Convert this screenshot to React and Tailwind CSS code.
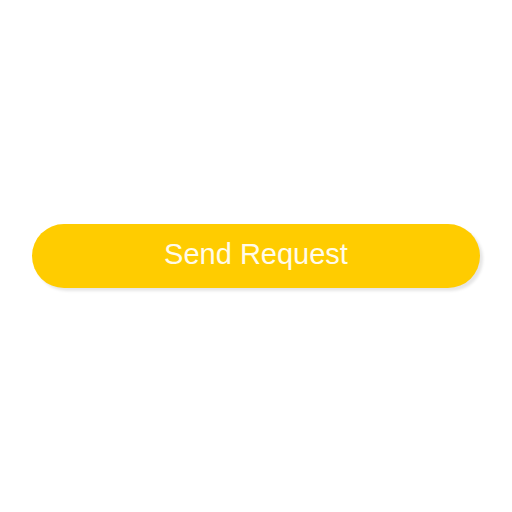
import React from 'react';

export default function App() {
  return (
    <div className="flex h-[512px] w-[512px] items-center bg-white px-8" style={{ fontFamily: '"Liberation Sans", Arial, sans-serif' }}>
      <button className="flex h-16 w-[448px] items-center justify-center rounded-full bg-[#ffcc00] pb-[3px] text-[29px] text-[#fffbea] shadow-[3px_3px_3px_rgba(0,0,0,0.1)]">
        Send Request
      </button>
    </div>
  );
}
